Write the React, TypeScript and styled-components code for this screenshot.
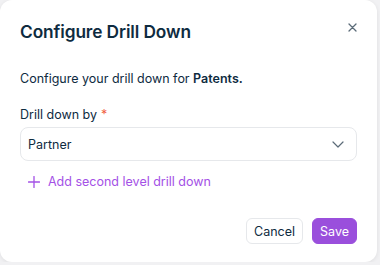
import React from "react";
import styled, { createGlobalStyle } from "styled-components";

const Global = createGlobalStyle`
  html, body { margin: 0; padding: 0; background: #f1f1f3; }
  body { font-family: Inter, "Noto Sans", sans-serif; -webkit-font-smoothing: antialiased; }
  * { box-sizing: border-box; }
`;

const Dialog = styled.div`
  width: 377px;
  height: 262px;
  background: #ffffff;
  border-radius: 12px;
  box-shadow: 0 1px 4px rgba(0,0,0,0.08);
  position: relative;
  padding: 20px 20px 0 20px;
  display: flex;
  flex-direction: column;
  color: #0e2b3f;
`;

const Title = styled.h2`
  margin: 0;
  font-size: 17.3px;
  font-weight: 600;
  line-height: 24px;
  letter-spacing: -0.1px;
`;

const Close = styled.button`
  position: absolute;
  top: 20px;
  right: 18px;
  width: 14px;
  height: 14px;
  padding: 0;
  border: none;
  background: none;
  display: flex;
  align-items: center;
  justify-content: center;
  color: #5b6b78;
`;

const Desc = styled.p`
  margin: 26px 0 0;
  font-size: 12.5px;
  line-height: 18px;
  b { font-weight: 600; }
`;

const Label = styled.div`
  margin-top: 18px;
  font-size: 12.5px;
  line-height: 18px;
  span { color: #f0603f; margin-left: 4px; }
`;

const Select = styled.div`
  margin-top: 3px;
  height: 34px;
  border: 1px solid #e6e8eb;
  border-radius: 8px;
  display: flex;
  align-items: center;
  justify-content: space-between;
  padding: 0 12px 0 7px;
  font-size: 12.5px;
`;

const AddLink = styled.div`
  margin-top: 12px;
  display: flex;
  align-items: center;
  gap: 8px;
  padding-left: 8px;
  font-size: 12.5px;
  line-height: 18px;
  color: #a451e6;
`;

const Footer = styled.div`
  margin-top: 27px;
  display: flex;
  justify-content: flex-end;
  gap: 9px;
`;

const Button = styled.button<{ $primary?: boolean }>`
  height: 26px;
  padding: 0 7px;
  border-radius: 6px;
  font-family: inherit;
  font-size: 12.5px;
  border: 1px solid ${p => (p.$primary ? "#9a4fdc" : "#e6e8eb")};
  background: ${p => (p.$primary ? "#9a4fdc" : "#ffffff")};
  color: ${p => (p.$primary ? "#ffffff" : "#0e2b3f")};
`;

export default function App() {
  return (
    <>
      <Global />
      <Dialog>
        <Title>Configure Drill Down</Title>
        <Close aria-label="Close">
          <svg width="9" height="9" viewBox="0 0 9 9" fill="none" stroke="currentColor" strokeWidth="1.3" strokeLinecap="round">
            <path d="M1 1L8 8M8 1L1 8" />
          </svg>
        </Close>
        <Desc>
          Configure your drill down for <b>Patents.</b>
        </Desc>
        <Label>
          Drill down by<span>*</span>
        </Label>
        <Select>
          <span>Partner</span>
          <svg width="12" height="7" viewBox="0 0 12 7" fill="none" stroke="#5b6b78" strokeWidth="1.2" strokeLinecap="round" strokeLinejoin="round">
            <path d="M1 1L6 6L11 1" />
          </svg>
        </Select>
        <AddLink>
          <svg width="12" height="12" viewBox="0 0 12 12" fill="none" stroke="currentColor" strokeWidth="1.3" strokeLinecap="round">
            <path d="M6 0.5V11.5M0.5 6H11.5" />
          </svg>
          Add second level drill down
        </AddLink>
        <Footer>
          <Button>Cancel</Button>
          <Button $primary>Save</Button>
        </Footer>
      </Dialog>
    </>
  );
}
